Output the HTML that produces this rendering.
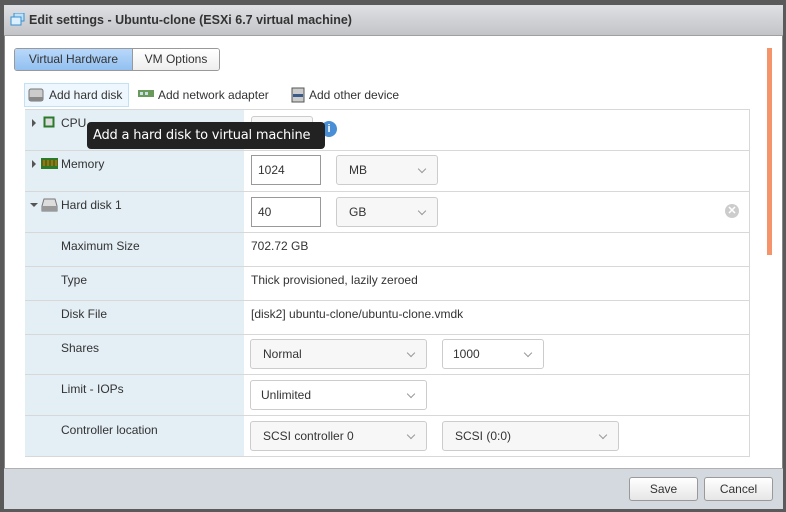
<!DOCTYPE html>
<html><head><style>
*{box-sizing:border-box;margin:0;padding:0}
body{width:786px;height:512px;background:#5a5a5a;font-family:"Liberation Sans",sans-serif;font-size:12px;color:#333;position:relative;overflow:hidden}
.abs{position:absolute}
.dlg{left:4px;top:5px;width:779px;height:504px;background:#fff;border:1px solid #888}
.title{left:4px;top:5px;width:779px;height:31px;background:linear-gradient(#dfe0e3,#c2c4c8);border-bottom:1px solid #a0a0a0;font-weight:bold;font-size:12.5px;color:#333;padding:8px 0 0 25px}
.footer{left:4px;top:468px;width:779px;height:41px;background:#d4d9df;border-top:1px solid #b0b0b0}
.btn{height:24px;border:1px solid #999;border-radius:3px;background:linear-gradient(#fff,#e6e6e6);text-align:center;line-height:22px;color:#333}
.row{left:25px;width:724px;border-bottom:1px solid #d8d8d8}
.lc{left:25px;width:219px;background:#e3eef5}
.lbl{left:61px}
.inp{border:1px solid #999;background:#fff;height:30px;line-height:28px;padding-left:6px;color:#333}
.sel{border:1px solid #ccc;border-radius:3px;background:#f7f7f7;height:30px;line-height:28px;padding-left:12px;color:#333}
.sel:after{content:"";position:absolute;right:12px;top:10px;width:5px;height:5px;border-right:1px solid #999;border-bottom:1px solid #999;transform:rotate(45deg)}
.tri{width:0;height:0;border-top:4px solid transparent;border-bottom:4px solid transparent;border-left:4px solid #555}
</style></head><body>
<div class="abs dlg"></div>
<div class="abs title">Edit settings - Ubuntu-clone (ESXi 6.7 virtual machine)</div>
<svg class="abs" style="left:10px;top:13px" width="15" height="13"><rect x="4" y="0" width="10" height="8" fill="#bfe0f7" stroke="#3a8fd0"/><rect x="1" y="4" width="10" height="8" fill="#dcefff" stroke="#3a8fd0"/></svg>
<div class="abs" style="left:14px;top:48px;width:206px;height:23px;border:1px solid #999;border-radius:3px;overflow:hidden;display:flex">
<div style="width:118px;background:linear-gradient(#b8d8fb,#92c0f0);text-align:center;line-height:21px;border-right:1px solid #999;color:#333">Virtual Hardware</div>
<div style="flex:1;background:linear-gradient(#fff,#eee);text-align:center;line-height:21px">VM Options</div></div>
<div class="abs" style="left:24px;top:83px;width:105px;height:24px;background:#eef7fd;border:1px solid #c3e1f5"></div>
<svg class="abs" style="left:28px;top:88px" width="16" height="14"><rect x="1" y="1" width="14" height="12" rx="2" fill="#ccc" stroke="#777"/><rect x="1" y="9" width="14" height="4" fill="#888"/></svg>
<div class="abs" style="left:49px;top:88px">Add hard disk</div>
<svg class="abs" style="left:138px;top:89px" width="16" height="10"><rect x="0" y="1" width="16" height="7" fill="#6a9a5a"/><rect x="2" y="3" width="3" height="3" fill="#cde"/><rect x="7" y="3" width="3" height="3" fill="#cde"/></svg>
<div class="abs" style="left:158px;top:88px">Add network adapter</div>
<svg class="abs" style="left:291px;top:87px" width="14" height="16"><rect x="1" y="1" width="12" height="14" fill="#ccc" stroke="#555"/><rect x="2" y="7" width="10" height="3" fill="#3a5a8a"/></svg>
<div class="abs" style="left:309px;top:88px">Add other device</div>
<div class="abs" style="left:25px;top:109px;width:724px;height:348px;border:1px solid #d8d8d8;border-bottom:none;border-right:none"></div>
<div class="abs lc" style="top:110px;height:347px"></div>
<div class="abs row" style="top:109px;height:42px"></div>
<div class="abs row" style="top:150px;height:42px"></div>
<div class="abs row" style="top:191px;height:42px"></div>
<div class="abs row" style="top:232px;height:35px"></div>
<div class="abs row" style="top:266px;height:35px"></div>
<div class="abs row" style="top:300px;height:35px"></div>
<div class="abs row" style="top:334px;height:41px"></div>
<div class="abs row" style="top:374px;height:42px"></div>
<div class="abs row" style="top:415px;height:42px"></div>
<div class="abs" style="left:749px;top:109px;width:1px;height:348px;background:#d8d8d8"></div>
<div class="abs tri" style="left:32px;top:119px"></div>
<svg class="abs" style="left:43px;top:116px" width="12" height="12"><rect x="0.5" y="0.5" width="11" height="11" fill="#2a7a2a"/><rect x="2.5" y="2.5" width="7" height="7" fill="#ddd"/></svg>
<div class="abs" style="left:61px;top:116px">CPU</div>
<div class="abs" style="left:251px;top:116px;width:62px;height:30px;border:1px solid #ccc;border-radius:3px;background:#f7f7f7"></div>
<div class="abs" style="left:321px;top:121px;width:16px;height:16px;border-radius:50%;background:#4a8fd6;color:#fff;font-size:11px;text-align:center;line-height:16px;font-weight:bold">i</div>
<div class="abs tri" style="left:32px;top:160px"></div>
<svg class="abs" style="left:41px;top:158px" width="17" height="11"><rect x="0" y="0" width="17" height="11" fill="#2a7a2a"/><rect x="2" y="2" width="2" height="6" fill="#b60"/><rect x="6" y="2" width="2" height="6" fill="#b60"/><rect x="10" y="2" width="2" height="6" fill="#b60"/><rect x="14" y="2" width="2" height="6" fill="#b60"/></svg>
<div class="abs" style="left:61px;top:157px">Memory</div>
<div class="abs inp" style="left:251px;top:155px;width:70px">1024</div>
<div class="abs sel" style="left:336px;top:155px;width:102px">MB</div>
<div class="abs" style="left:30px;top:203px;width:0;height:0;border-left:4px solid transparent;border-right:4px solid transparent;border-top:4px solid #555"></div>
<svg class="abs" style="left:41px;top:198px" width="17" height="14"><path d="M3 1h11l2 7v5H1V8z" fill="#ddd" stroke="#777"/><rect x="1" y="8" width="15" height="5" fill="#999"/></svg>
<div class="abs" style="left:61px;top:198px">Hard disk 1</div>
<div class="abs inp" style="left:251px;top:197px;width:70px">40</div>
<div class="abs sel" style="left:336px;top:197px;width:102px">GB</div>
<div class="abs" style="left:725px;top:204px;width:14px;height:14px;border-radius:50%;background:#ccc;color:#fff;font-size:11px;text-align:center;line-height:14px;font-weight:bold">✕</div>
<div class="abs lbl" style="top:239px">Maximum Size</div><div class="abs" style="left:251px;top:239px">702.72 GB</div>
<div class="abs lbl" style="top:273px">Type</div><div class="abs" style="left:251px;top:273px">Thick provisioned, lazily zeroed</div>
<div class="abs lbl" style="top:307px">Disk File</div><div class="abs" style="left:251px;top:307px">[disk2] ubuntu-clone/ubuntu-clone.vmdk</div>
<div class="abs lbl" style="top:341px">Shares</div>
<div class="abs sel" style="left:250px;top:339px;width:177px">Normal</div>
<div class="abs sel" style="left:442px;top:339px;width:102px;padding-left:10px;background:#fff">1000</div>
<div class="abs lbl" style="top:382px">Limit - IOPs</div>
<div class="abs sel" style="left:250px;top:380px;width:177px;padding-left:10px;background:#fff">Unlimited</div>
<div class="abs lbl" style="top:423px">Controller location</div>
<div class="abs sel" style="left:250px;top:421px;width:177px">SCSI controller 0</div>
<div class="abs sel" style="left:442px;top:421px;width:177px">SCSI (0:0)</div>
<div class="abs" style="left:87px;top:122px;width:238px;height:27px;background:#222;border-radius:4px;color:#fff;font-size:13px;font-family:'DejaVu Sans',sans-serif;line-height:27px;padding-left:6px;white-space:nowrap;overflow:hidden;letter-spacing:-0.2px">Add a hard disk to virtual machine</div>
<div class="abs" style="left:767px;top:48px;width:5px;height:207px;background:#f5946a"></div>
<div class="abs footer"></div>
<div class="abs btn" style="left:629px;top:477px;width:69px">Save</div>
<div class="abs btn" style="left:704px;top:477px;width:69px">Cancel</div>
</body></html>
